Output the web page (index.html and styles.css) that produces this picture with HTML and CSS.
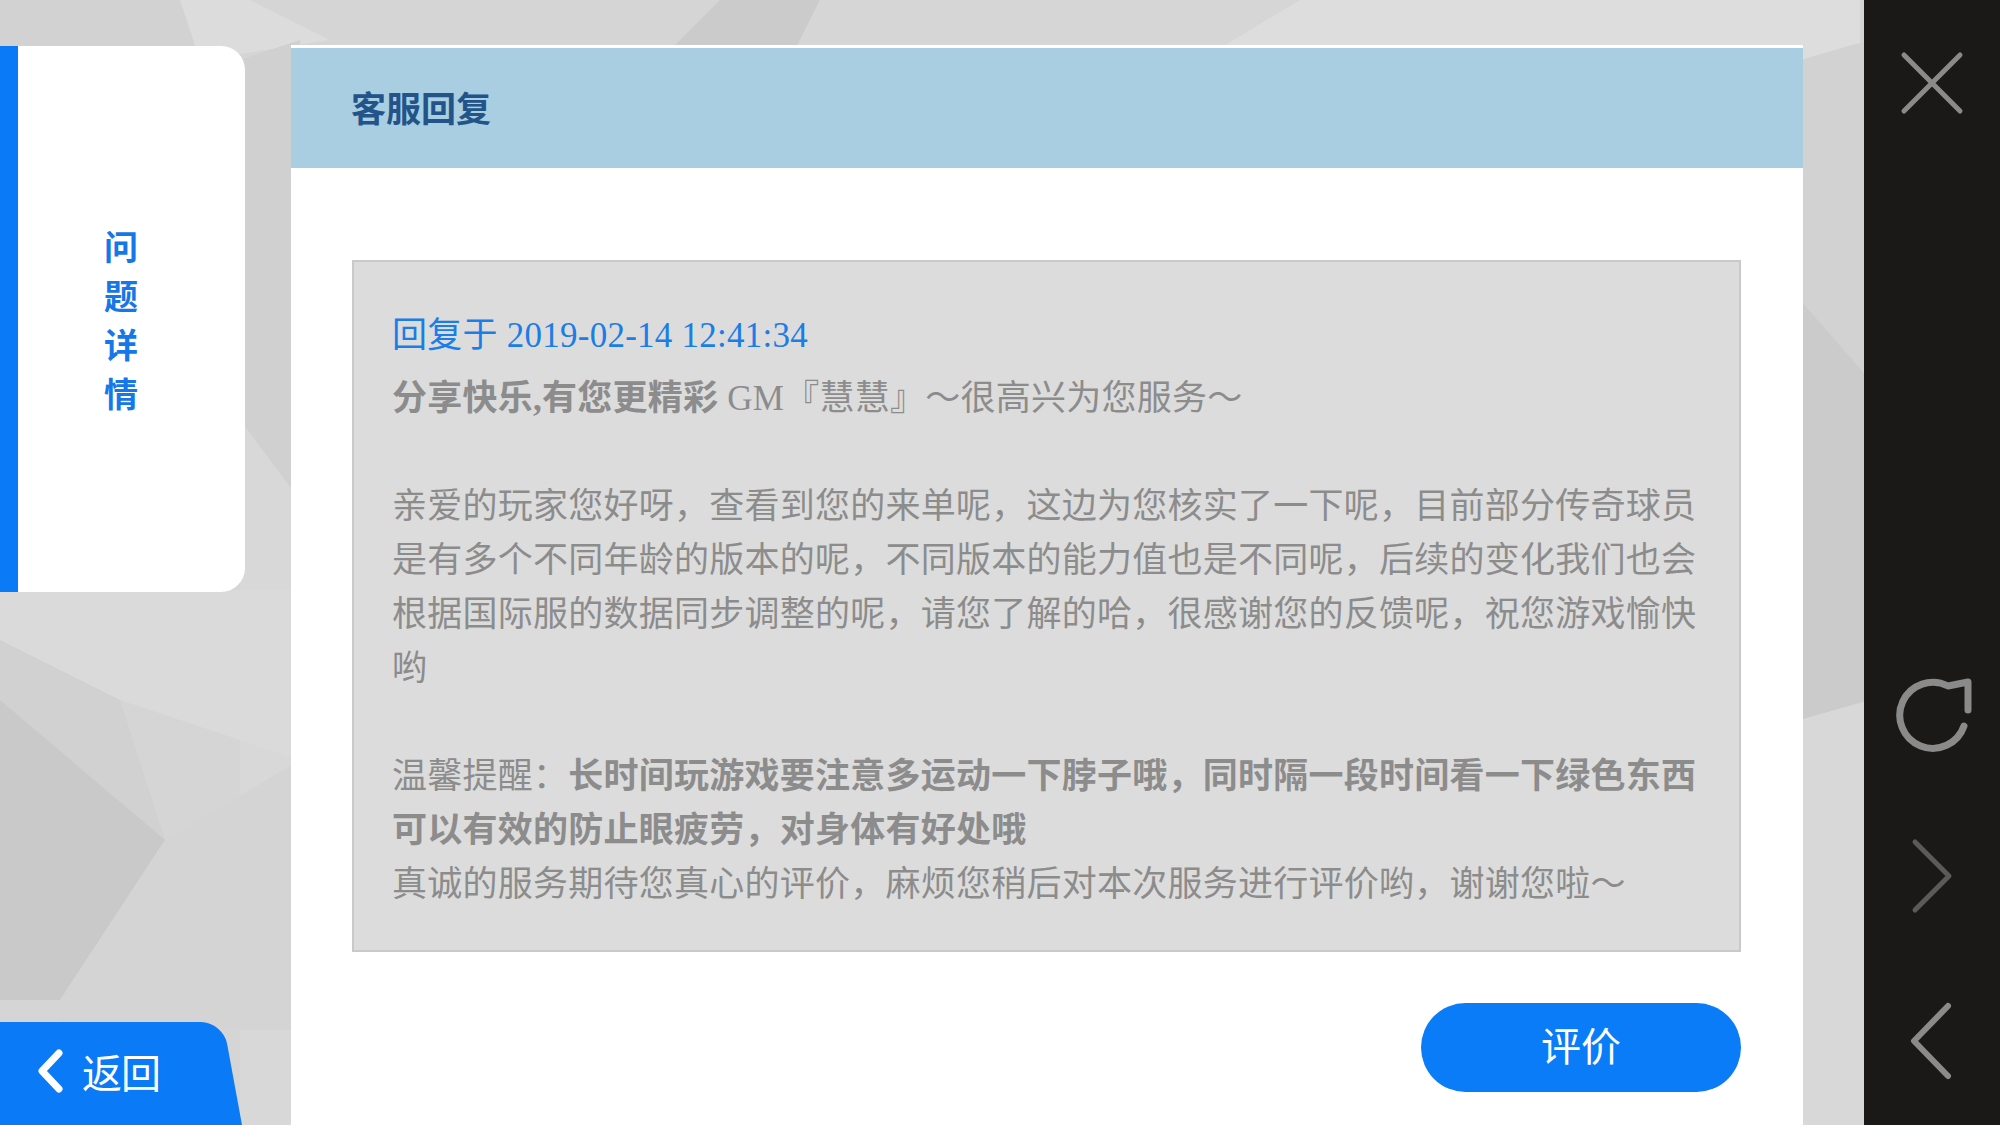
FILE: index.html
```html
<!DOCTYPE html>
<html lang="zh-CN">
<head>
<meta charset="utf-8">
<title>客服回复</title>
<link rel="stylesheet" href="styles.css">
</head>
<body>
<svg class="bg" viewBox="0 0 2000 1125" preserveAspectRatio="none" aria-hidden="true">
  <polygon points="0,0 180,0 240,60 0,60" fill="#d2d2d2"/>
  <polygon points="180,0 250,0 330,40 200,60" fill="#dcdcdc"/>
  <polygon points="720,0 820,0 790,60 660,60" fill="#cbcbcb"/>
  <polygon points="820,0 1300,0 1200,60 790,60" fill="#d6d6d6"/>
  <polygon points="1300,0 1860,0 1860,60 1200,60" fill="#dddddd"/>
  <polygon points="1800,60 1870,40 1870,380 1800,300" fill="#d2d2d2"/>
  <polygon points="1800,300 1870,380 1870,700 1800,720" fill="#cbcbcb"/>
  <polygon points="1800,720 1870,700 1870,1125 1800,1125" fill="#d8d8d8"/>
  <polygon points="240,60 300,40 300,500 240,420" fill="#d0d0d0"/>
  <polygon points="240,420 300,500 300,1125 240,1125" fill="#d8d8d8"/>
  <polygon points="0,590 300,590 300,760 120,700 0,640" fill="#dadada"/>
  <polygon points="0,640 120,700 165,840 0,700" fill="#d1d1d1"/>
  <polygon points="0,700 165,840 60,1000 0,1000" fill="#c9c9c9"/>
  <polygon points="165,840 300,760 300,1030 60,1030 60,1000" fill="#d4d4d4"/>
</svg>

<div class="app">
  <aside class="side">
    <div class="tab">
      <div class="tab-label"><span>问</span><span>题</span><span>详</span><span>情</span></div>
    </div>
    <div class="back">
      <svg class="back-icon" viewBox="0 0 28 46" aria-hidden="true">
        <polyline points="23,5 6,23 23,41" fill="none" stroke="#ffffff" stroke-width="7" stroke-linecap="round" stroke-linejoin="round"/>
      </svg>
      <span class="back-text">返回</span>
    </div>
  </aside>

  <main class="card">
    <header class="card-head">
      <h1 class="card-title">客服回复</h1>
    </header>
    <section class="card-body">
      <div class="reply">
        <div class="reply-time">回复于 2019-02-14 12:41:34</div>
        <div class="reply-text"><b>分享快乐,有您更精彩</b> GM『慧慧』～很高兴为您服务～<br><br>亲爱的玩家您好呀，查看到您的来单呢，这边为您核实了一下呢，目前部分传奇球员是有多个不同年龄的版本的呢，不同版本的能力值也是不同呢，后续的变化我们也会根据国际服的数据同步调整的呢，请您了解的哈，很感谢您的反馈呢，祝您游戏愉快哟<br><br>温馨提醒：<b>长时间玩游戏要注意多运动一下脖子哦，同时隔一段时间看一下绿色东西可以有效的防止眼疲劳，对身体有好处哦</b><br>真诚的服务期待您真心的评价，麻烦您稍后对本次服务进行评价哟，谢谢您啦～</div>
      </div>
      <div class="actions">
        <button class="rate" type="button">评价</button>
      </div>
    </section>
  </main>

  <nav class="rail">
    <svg class="ico ico-close" viewBox="0 0 80 80" aria-hidden="true">
      <path d="M12,12 L68,68 M68,12 L12,68" fill="none" stroke="#8a8a8a" stroke-width="5" stroke-linecap="round"/>
    </svg>
    <svg class="ico ico-refresh" viewBox="0 0 80 80" aria-hidden="true">
      <path d="M72,52 A33,33 0 1 1 56,12 L76,8 L76,36" fill="none" stroke="#8a8a8a" stroke-width="7" stroke-linecap="round" stroke-linejoin="round"/>
    </svg>
    <svg class="ico ico-next" viewBox="0 0 80 80" aria-hidden="true">
      <polyline points="23,6 57,40 23,74" fill="none" stroke="#5a5a5a" stroke-width="5" stroke-linecap="round" stroke-linejoin="round"/>
    </svg>
    <svg class="ico ico-prev" viewBox="0 0 80 80" aria-hidden="true">
      <polyline points="56,5 22,40 56,75" fill="none" stroke="#8a8a8a" stroke-width="6" stroke-linecap="round" stroke-linejoin="round"/>
    </svg>
  </nav>
</div>
</body>
</html>
```

FILE: styles.css
```css
html, body {
  margin: 0;
  padding: 0;
}

body {
  width: 2000px;
  height: 1125px;
  overflow: hidden;
  position: relative;
  background: #d5d5d5;
  font-family: "Liberation Serif", "Noto Sans CJK SC", serif;
}

.bg {
  position: absolute;
  left: 0;
  top: 0;
  width: 2000px;
  height: 1125px;
  z-index: 0;
}

.app {
  position: relative;
  z-index: 1;
  display: flex;
  height: 1125px;
}

/* ---------- left column ---------- */
.side {
  width: 291px;
  flex: none;
  display: flex;
  flex-direction: column;
  justify-content: space-between;
}

.tab {
  margin-top: 46px;
  width: 245px;
  height: 546px;
  box-sizing: border-box;
  border-left: 18px solid #0a7af7;
  background: #ffffff;
  border-radius: 0 24px 24px 0;
  display: flex;
  align-items: center;
  justify-content: center;
  padding-right: 21px;
}

.tab-label {
  display: flex;
  flex-direction: column;
  gap: 15px;
  font-family: "Noto Sans CJK SC", sans-serif;
  font-size: 34px;
  line-height: 34px;
  font-weight: 700;
  color: #1677e8;
}

.back {
  position: relative;
  width: 242px;
  height: 103px;
  display: flex;
  align-items: center;
  padding-left: 36px;
  padding-bottom: 6px;
  box-sizing: border-box;
}

.back::before {
  content: "";
  position: absolute;
  left: 0;
  top: 0;
  right: 0;
  bottom: 0;
  background: #0a7af7;
  border-top-right-radius: 22px;
  transform: skewX(10.4deg);
  transform-origin: left bottom;
  z-index: 0;
}

.back-icon {
  position: relative;
  z-index: 1;
  width: 28px;
  height: 46px;
  margin-right: 18px;
  flex: none;
}

.back-text {
  position: relative;
  z-index: 1;
  font-family: "Noto Sans CJK SC", sans-serif;
  font-size: 40px;
  line-height: 40px;
  color: #ffffff;
  letter-spacing: -1px;
}

/* ---------- main card ---------- */
.card {
  width: 1512px;
  flex: none;
  margin-top: 45px;
  background: #ffffff;
  border-top: 3px solid #ffffff;
  display: flex;
  flex-direction: column;
}

.card-head {
  height: 120px;
  background: #a9cde1;
  display: flex;
  align-items: center;
  padding-left: 60px;
  padding-bottom: 3px;
  box-sizing: border-box;
}

.card-title {
  margin: 0;
  font-family: "Noto Sans CJK SC", sans-serif;
  font-size: 35px;
  line-height: 1;
  font-weight: 700;
  color: #22548a;
}

.card-body {
  padding: 92px 62px 0 61px;
  display: flex;
  flex-direction: column;
}

.reply {
  box-sizing: border-box;
  height: 692px;
  border: 2px solid #c9c9c9;
  background: #dcdcdc;
  padding: 47px 30px 0 38px;
  letter-spacing: 0.25px;
}

.reply-time {
  font-size: 35px;
  line-height: 54px;
  color: #1b7de6;
}

.reply-text {
  margin-top: 9px;
  font-size: 35px;
  line-height: 54px;
  color: #8c8c8c;
}

.reply-text b {
  font-weight: 700;
}

.actions {
  display: flex;
  justify-content: flex-end;
  margin-top: 51px;
}

.rate {
  width: 320px;
  height: 89px;
  padding: 0 0 7px 0;
  border: 0;
  border-radius: 45px;
  background: #0a7cf8;
  color: #ffffff;
  font-family: "Noto Sans CJK SC", sans-serif;
  font-size: 40px;
  line-height: 1;
  cursor: pointer;
}

/* ---------- right rail ---------- */
.rail {
  width: 136px;
  flex: none;
  margin-left: 61px;
  background: #1b1918;
  display: flex;
  flex-direction: column;
  align-items: center;
}

.ico {
  width: 80px;
  height: 80px;
  display: block;
  flex: none;
}

.ico-close { margin-top: 43px; }
.ico-refresh { margin-top: 551px; }
.ico-next { margin-top: 82px; }
.ico-prev { margin-top: 85px; }
```
